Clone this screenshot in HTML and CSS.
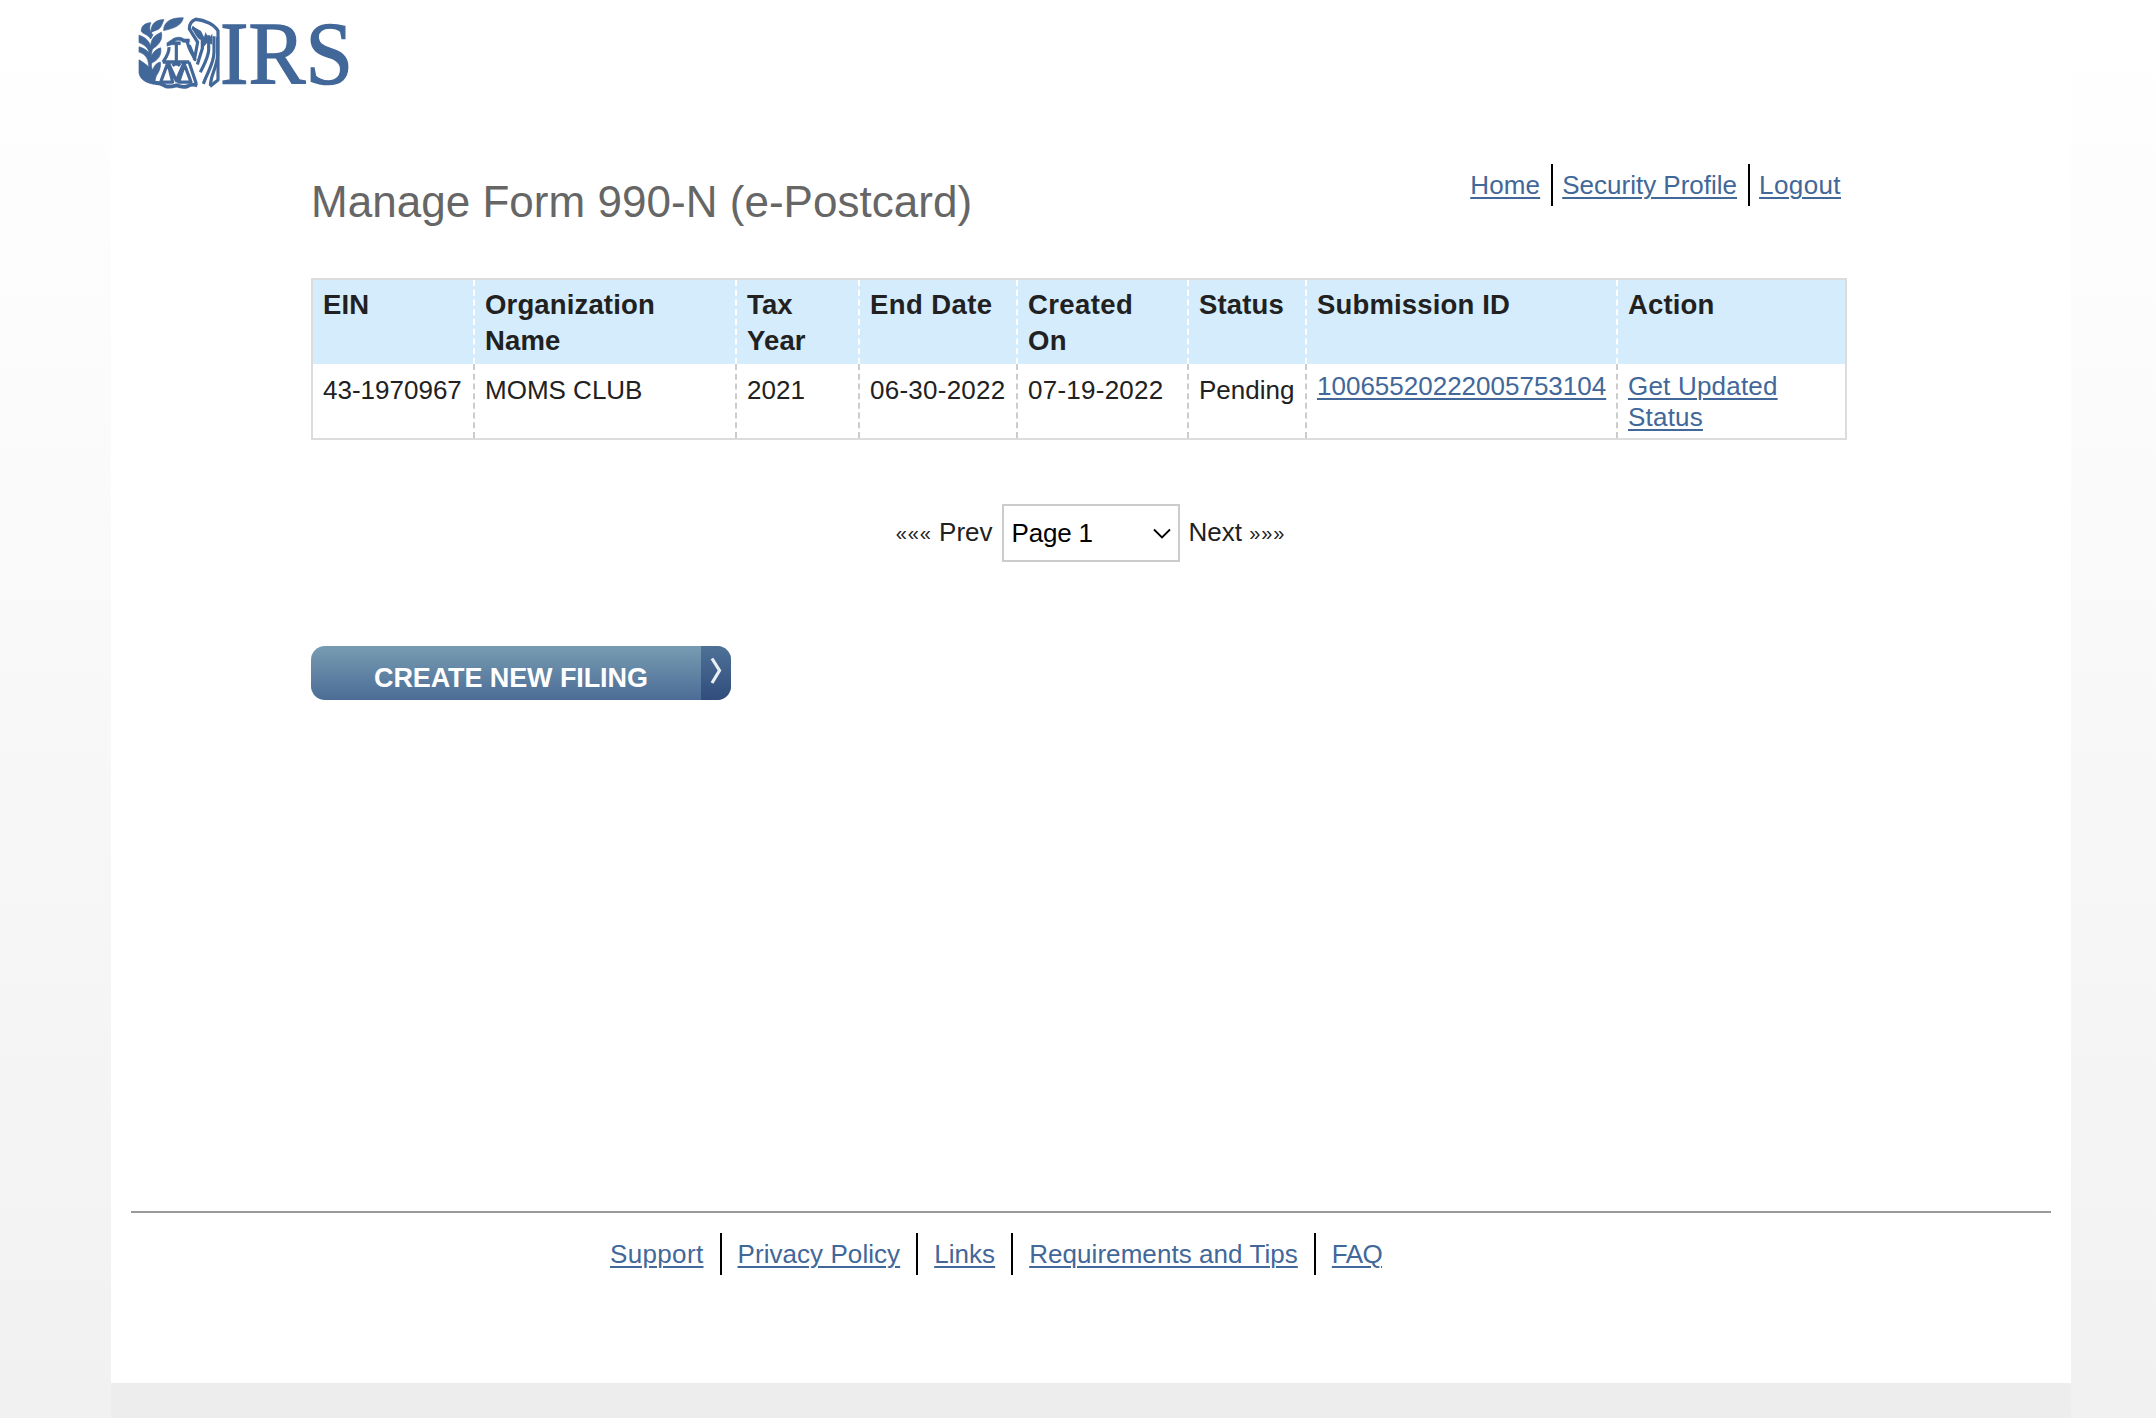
FILE: index.html
```html
<!DOCTYPE html>
<html lang="en">
<head>
<meta charset="utf-8">
<title>Manage Form 990-N (e-Postcard)</title>
<link rel="stylesheet" href="styles.css">
</head>
<body>
<div class="page">
  <header class="masthead">
    <svg class="logo" viewBox="0 0 240 100" role="img" aria-label="IRS">
      <g transform="translate(0 -.5) scale(.33333 .353)">
        <g fill="#426799" stroke="#426799" stroke-width="2">
          <path d="M89 54C88 29 114 16 148 18C143 41 116 49 89 54Z"/>
          <path d="M51 60C50 35 66 23 90 23C85 33 83 44 74 50C65 54 58 55 51 60Z"/>
          <path d="M22 57C20 42 34 31 51 32C44 44 47 57 57 66L50 78C41 65 30 65 22 57Z"/>
          <path d="M15 67C31 72 44 80 50 98C51 81 58 68 82 59C87 79 76 94 56 106C53 112 53 120 52 128C58 114 66 107 80 103C84 124 72 138 53 146C51 153 53 160 56 166C61 153 67 146 79 143C81 159 76 170 67 182L60 206C38 203 18 193 15 174V137C27 143 36 150 45 158L42 140C37 126 28 119 15 115V100C27 103 37 108 45 117C43 102 30 94 15 88Z"/>
          <path d="M99 89L112 81C122 72 139 70 150 78H166V87H147C138 80 128 80 120 86L139 86V94H113L99 98Z"/>
        </g>
        <g fill="none" stroke="#426799" stroke-width="9.5" stroke-linejoin="round">
          <path d="M127 90V154M116 154L127 142L138 154" />
          <path d="M86 143H166M101 146L80 200H116L104 154M153 146L134 200H171L153 154M104 148L127 196L149 148"/>
          <path stroke-width="11" d="M60 202Q78 201 96 212Q110 214 127 209Q146 216 160 212Q173 204 190 209"/>
          <path d="M105 101C106 120 94 132 87 143M159 83C164 106 174 118 183 136L166 96M165 143L187 205"/>
          <path d="M181 137L191 87L166 49C165 37 174 25 185 22C213 24 241 38 252 55V194L228 212"/>
          <path d="M174 45C187 50 188 76 205 77V105L190 150M224 67V110C222 133 208 153 199 172M240 70V115C240 148 220 172 208 205M251 72V122C249 160 231 175 229 210"/>
        </g>
        <path fill="#426799" d="M180 44L201 55L210 72L215 58L224 78L235 62V94L221 87L205 105V86Z"/>
      </g>
      <text x="86" y="70.5" textLength="133" lengthAdjust="spacingAndGlyphs">IRS</text>
    </svg>
  </header>

  <main class="content">
    <div class="heading">
      <h1>Manage Form 990-N (e-Postcard)</h1>
      <nav class="links account">
        <a href="#">Home</a><a href="#">Security Profile</a><a href="#">Logout</a>
      </nav>
    </div>

    <table class="filings">
      <colgroup>
        <col class="c-ein"><col class="c-org"><col class="c-year"><col class="c-end"><col class="c-created"><col class="c-status"><col class="c-id"><col class="c-action">
      </colgroup>
      <thead>
        <tr><th>EIN</th><th>Organization<br>Name</th><th>Tax<br>Year</th><th class="date">End Date</th><th class="date">Created<br>On</th><th>Status</th><th>Submission ID</th><th>Action</th></tr>
      </thead>
      <tbody>
        <tr><td>43-1970967</td><td>MOMS CLUB</td><td>2021</td><td class="date">06-30-2022</td><td class="date">07-19-2022</td><td>Pending</td><td class="linked"><a href="#">10065520222005753104</a></td><td class="linked action"><a href="#">Get Updated<br>Status</a></td></tr>
      </tbody>
    </table>
  </main>

  <div class="pager">
    <span><span class="marks">«««</span> Prev</span>
    <div class="select"><span>Page 1</span>
      <svg width="18" height="11" viewBox="0 0 18 11"><path d="M1 1.5L9 9.5L17 1.5" fill="none" stroke="#000" stroke-width="1.8"/></svg>
    </div>
    <span>Next <span class="marks">»»»</span></span>
  </div>

  <a class="create" href="#"><span class="create-label">CREATE NEW FILING</span><span class="create-arrow"><svg width="14" height="28" viewBox="0 0 14 28"><path d="M3 1.5L10.5 13.5L3 26" fill="none" stroke="#e9eef5" stroke-width="3.2"/></svg></span></a>

  <footer class="footer">
    <nav class="links site">
      <a class="support" href="#">Support</a><a href="#">Privacy Policy</a><a href="#">Links</a><a href="#">Requirements and Tips</a><a class="faq" href="#">FAQ</a>
    </nav>
  </footer>
</div>
</body>
</html>
```
FILE: styles.css
```css
* { box-sizing: border-box; }
html { height: 100%; }
body {
  margin: 0;
  height: 1418px;
  overflow: hidden;
  background: linear-gradient(#fff, #f1f1f1);
  font: 26px/31px "Liberation Sans", Arial, sans-serif;
  color: #212121;
}
a { color: #426799; text-decoration-thickness: 2px; text-underline-offset: 3px; }

.page {
  display: flex;
  flex-direction: column;
  width: 1960px;
  height: 1418px;
  margin-left: 111px;
  background: #fff;
  border-bottom: 35px solid #ededed;
}
.masthead { height: 164px; padding: 12px 0 0 23px; }
.logo { display: block; width: 240px; height: 100px; overflow: visible; }
.logo text {
  font: 89px "Liberation Serif", "Times New Roman", serif;
  fill: #426799;
  stroke: #426799;
  stroke-width: 1.4px;
}

.content { width: 1536px; margin-left: 200px; }
.heading { display: flex; justify-content: space-between; height: 114px; padding-right: 6px; }
h1 { margin: 13px 0 0; font-size: 44px; line-height: 50px; font-weight: 400; color: #666; letter-spacing: .03px; }

.links { display: flex; height: 42px; line-height: 42px; white-space: nowrap; }
.links a + a { border-left: 2px solid #000; }
.account a { padding: 0 11px 0 9px; }
.account a:first-child { letter-spacing: .15px; }
.account a:last-child { padding-right: 0; letter-spacing: .4px; }

.filings { table-layout: fixed; width: 1536px; border: 2px solid #dcdcdc; border-spacing: 0; }
.c-ein { width: 162px; }
.c-org { width: 262px; }
.c-year { width: 123px; }
.c-end { width: 158px; }
.c-created { width: 171px; }
.c-status { width: 118px; }
.c-id { width: 311px; }
.c-action { width: 227px; }
th, td { text-align: left; vertical-align: top; white-space: nowrap; border-right: 2px dashed #ccc; }
th { height: 84px; padding: 7px 0 5px 10px; font-size: 27.5px; line-height: 36px; letter-spacing: .15px; background: #d4ecfc; border-right-color: #fff; }
th.date { letter-spacing: .4px; }
td { height: 74px; padding: 7px 0 5px 10px; line-height: 38px; }
td.date { letter-spacing: .25px; }
td.linked { line-height: 31px; }
td.action { letter-spacing: .2px; }
th:last-child, td:last-child { border-right: 0; }

.pager { display: flex; justify-content: center; gap: 9px; height: 58px; margin: 64px 1px 0 0; line-height: 56px; }
.marks { font-size: 20px; line-height: 1; letter-spacing: .9px; vertical-align: 1px; }
.select {
  display: flex;
  align-items: center;
  justify-content: space-between;
  width: 178px;
  height: 58px;
  padding: 0 7px 0 8px;
  border: 2px solid #ccc;
  color: #000;
  letter-spacing: -.2px;
}

.create {
  display: flex;
  width: 420px;
  height: 54px;
  margin: 84px 0 0 200px;
  border-radius: 14px;
  overflow: hidden;
  text-decoration: none;
  color: #fff;
  background: linear-gradient(#779cb2, #4c6c97);
}
.create-label { width: 390px; padding: 1px 0 0 63px; font-size: 27px; line-height: 62px; font-weight: 700; white-space: nowrap; letter-spacing: -.1px; }
.create-arrow { width: 30px; padding: 11px 0 0 8px; line-height: 0; background: linear-gradient(#4f7197, #304d7c); }

.footer { margin: auto 20px 0; height: 172px; padding: 20px 0 0 479px; border-top: 2px solid #999; }
.site a { padding: 0 16px; letter-spacing: .06px; }
.site .support { padding-left: 0; letter-spacing: .35px; }
.site .faq { letter-spacing: -.6px; }
```
